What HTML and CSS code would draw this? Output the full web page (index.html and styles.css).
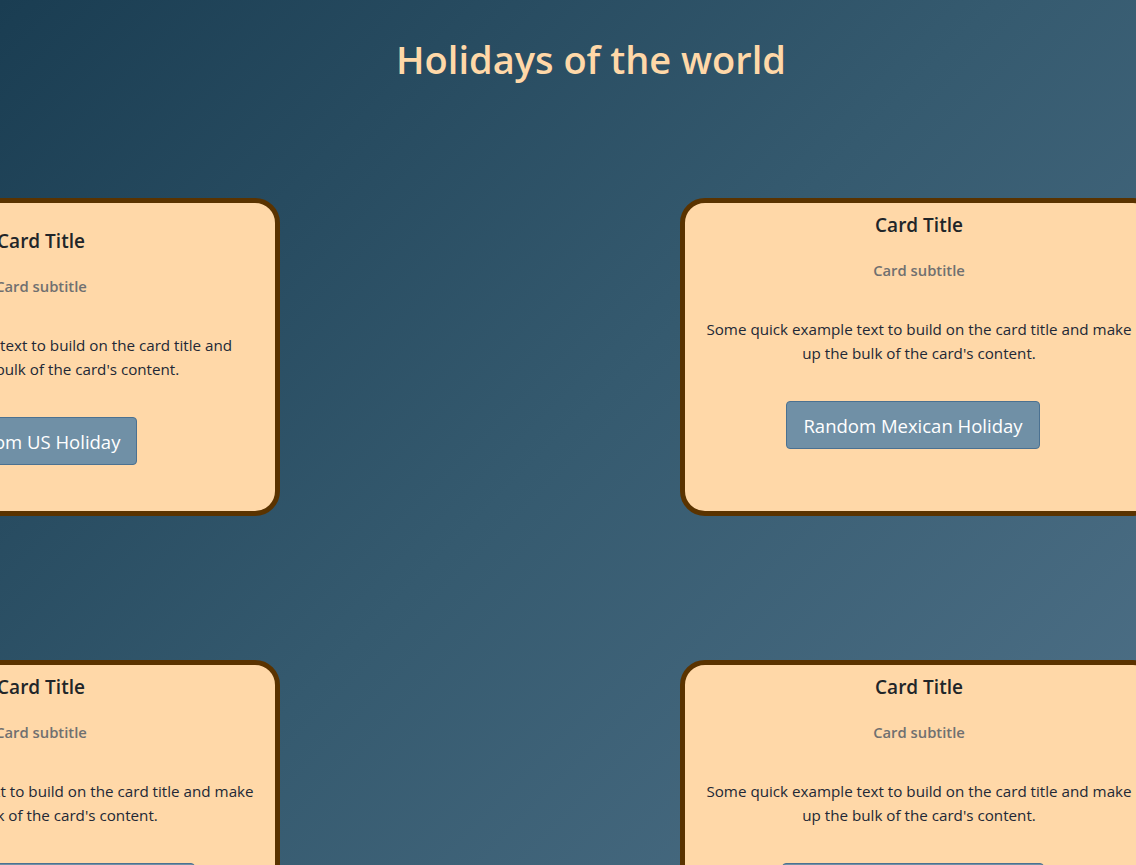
FILE: index.html
```html
<!DOCTYPE html>
<html lang="en">
<head>
<meta charset="utf-8">
<title>Holidays of the world</title>
<link rel="stylesheet" href="styles.css">
</head>
<body>
<div class="page">
  <header class="header">
    <h1 class="heading">Holidays of the world</h1>
  </header>
  <main class="grid">
    <section class="card card-shift">
      <h5 class="card-title">Card Title</h5>
      <h6 class="card-subtitle">Card subtitle</h6>
      <p class="card-text">Some quick example text to build on the card title and make up the bulk of the card's content.</p>
      <button class="btn">Random US Holiday</button>
    </section>
    <section class="card">
      <h5 class="card-title">Card Title</h5>
      <h6 class="card-subtitle">Card subtitle</h6>
      <p class="card-text">Some quick example text to build on the card title and make up the bulk of the card's content.</p>
      <button class="btn">Random Mexican Holiday</button>
    </section>
    <section class="card">
      <h5 class="card-title">Card Title</h5>
      <h6 class="card-subtitle">Card subtitle</h6>
      <p class="card-text">Some quick example text to build on the card title and make up the bulk of the card's content.</p>
      <button class="btn">Random United Kingdom Holiday</button>
    </section>
    <section class="card">
      <h5 class="card-title">Card Title</h5>
      <h6 class="card-subtitle">Card subtitle</h6>
      <p class="card-text">Some quick example text to build on the card title and make up the bulk of the card's content.</p>
      <button class="btn">Random Canadian Holiday</button>
    </section>
  </main>
</div>
</body>
</html>
```
FILE: styles.css
```css
html, body {
  margin: 0;
  padding: 0;
  overflow: hidden;
}
body {
  font-family: "Open Sans", "Noto Sans", sans-serif;
  background: linear-gradient(135deg, #1a3d52 0%, #355a6f 50%, #4f7188 100%);
  min-height: 100vh;
}
.page {
  height: 100vh;
  overflow: hidden;
}
.header {
  padding: 36px 0 0 46px;
  text-align: center;
}
.heading {
  margin: 0;
  font-size: 38px;
  line-height: 47px;
  font-weight: 600;
  color: #ffd8a8;
}
.grid {
  display: grid;
  grid-template-columns: 478px 478px;
  column-gap: 400px;
  row-gap: 144px;
  margin: 115px 0 0 -198px;
}
.card {
  box-sizing: border-box;
  height: 318px;
  background: #ffd8a8;
  border: 5px solid #5a3300;
  border-radius: 25px;
  padding: 10px 16px 0;
  text-align: center;
  display: flex;
  flex-direction: column;
  align-items: center;
}
.card-shift {
  padding: 26px 32px 0;
}
.card-title {
  margin: 0;
  font-size: 19px;
  line-height: 24px;
  font-weight: 600;
  color: #212529;
}
.card-subtitle {
  margin: 21px 0 0;
  font-size: 14.8px;
  line-height: 24px;
  font-weight: 600;
  color: #707070;
}
.card-text {
  margin: 35px 0 0;
  font-size: 15.2px;
  line-height: 24px;
  color: #222836;
}
.btn {
  margin: 36px 0 0;
  box-sizing: border-box;
  height: 48px;
  padding: 0 16px;
  font-family: inherit;
  font-size: 18.5px;
  color: #ffffff;
  background: #7090a6;
  border: 1px solid #4b7191;
  border-radius: 4px;
  position: relative;
  left: -6px;
}
```
